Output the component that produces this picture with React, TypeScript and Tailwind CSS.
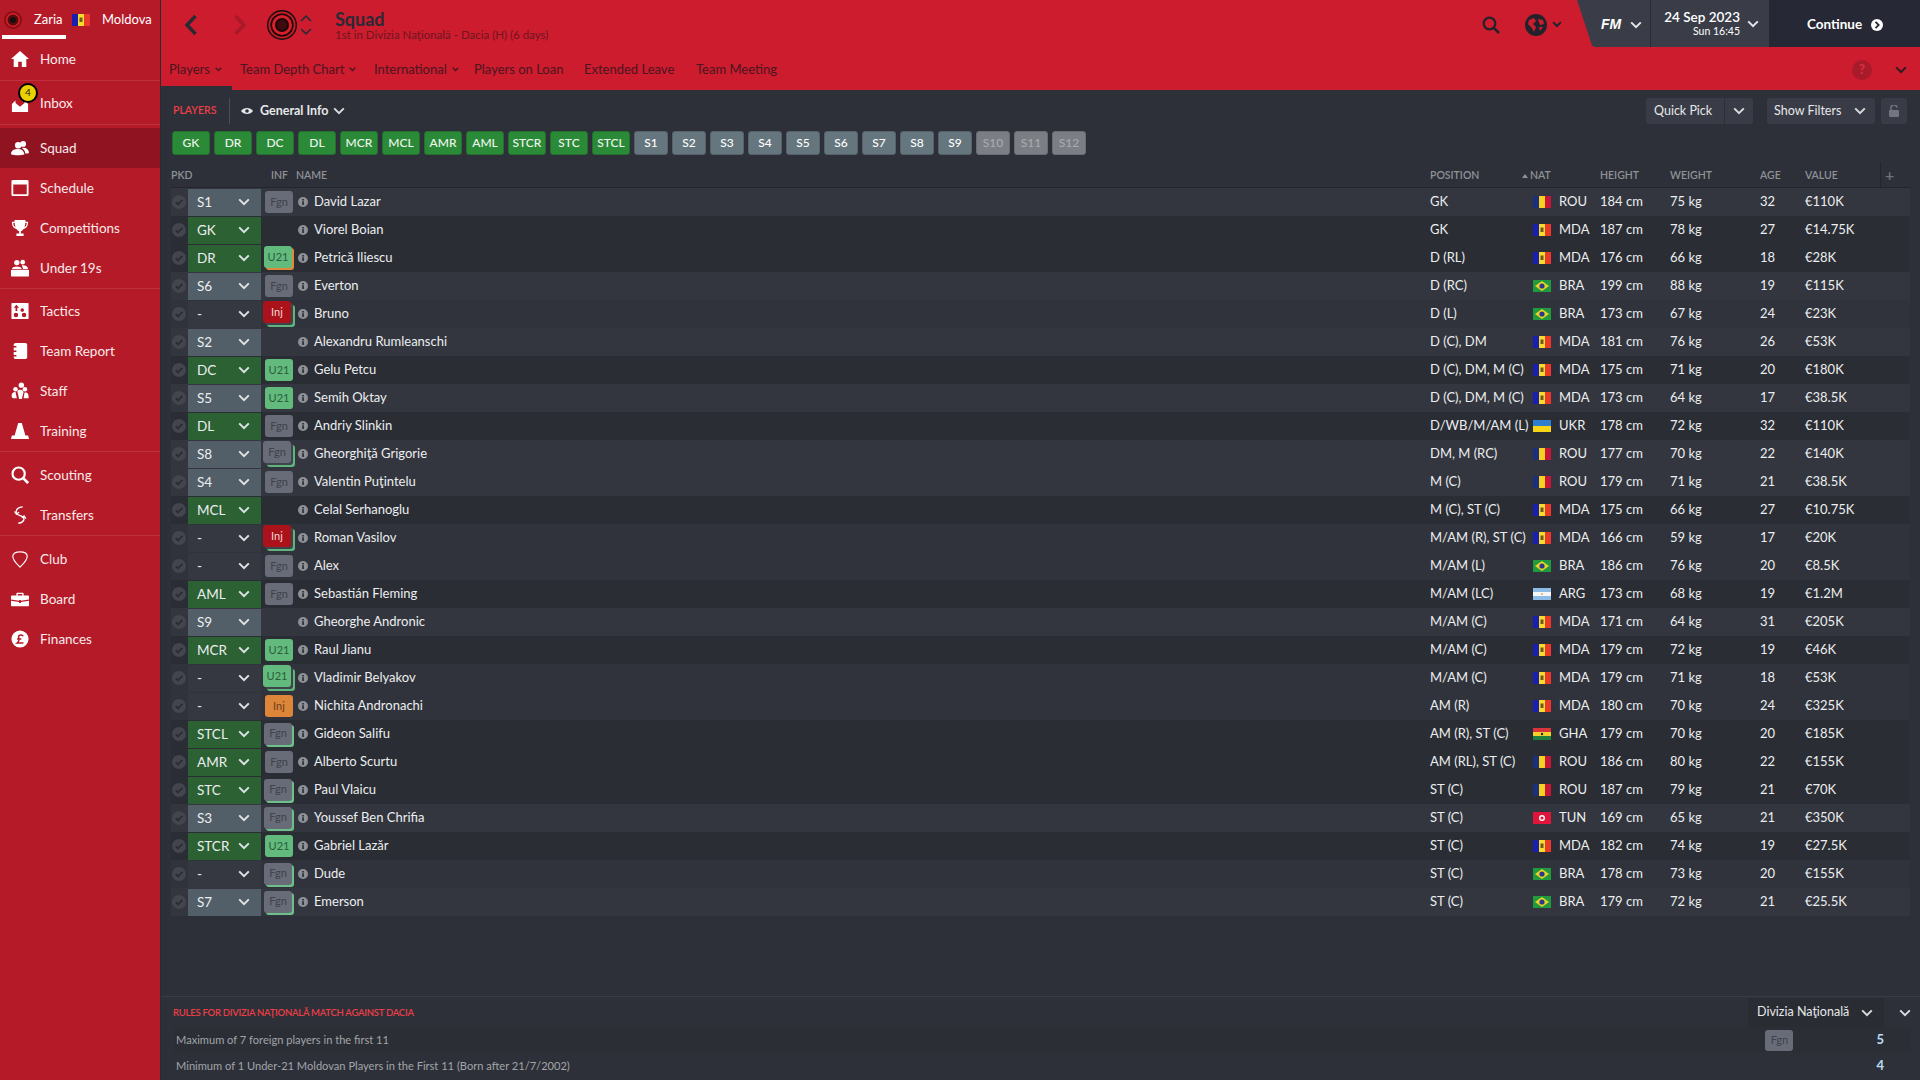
import type { ReactNode } from 'react'

type Nat = 'ROU' | 'MDA' | 'BRA' | 'UKR' | 'ARG' | 'GHA' | 'TUN'
type BadgeKind = 'Fgn' | 'U21' | 'Inj' | 'InjO' | null
type Stack = 'none' | 'thin' | 'orange' | 'double'

interface Player {
  pick: string
  badge: BadgeKind
  stack: Stack
  name: string
  pos: string
  nat: Nat
  height: number
  weight: number
  age: number
  value: string
}

const p = (
  pick: string,
  badge: BadgeKind,
  stack: Stack,
  name: string,
  pos: string,
  nat: Nat,
  height: number,
  weight: number,
  age: number,
  value: string,
): Player => ({ pick, badge, stack, name, pos, nat, height, weight, age, value })

const players: Player[] = [
  p('S1', 'Fgn', 'none', 'David Lazar', 'GK', 'ROU', 184, 75, 32, '€110K'),
  p('GK', null, 'none', 'Viorel Boian', 'GK', 'MDA', 187, 78, 27, '€14.75K'),
  p('DR', 'U21', 'orange', 'Petrică Iliescu', 'D (RL)', 'MDA', 176, 66, 18, '€28K'),
  p('S6', 'Fgn', 'none', 'Everton', 'D (RC)', 'BRA', 199, 88, 19, '€115K'),
  p('-', 'Inj', 'double', 'Bruno', 'D (L)', 'BRA', 173, 67, 24, '€23K'),
  p('S2', null, 'none', 'Alexandru Rumleanschi', 'D (C), DM', 'MDA', 181, 76, 26, '€53K'),
  p('DC', 'U21', 'none', 'Gelu Petcu', 'D (C), DM, M (C)', 'MDA', 175, 71, 20, '€180K'),
  p('S5', 'U21', 'none', 'Semih Oktay', 'D (C), DM, M (C)', 'MDA', 173, 64, 17, '€38.5K'),
  p('DL', 'Fgn', 'none', 'Andriy Slinkin', 'D/WB/M/AM (L)', 'UKR', 178, 72, 32, '€110K'),
  p('S8', 'Fgn', 'double', 'Gheorghiţă Grigorie', 'DM, M (RC)', 'ROU', 177, 70, 22, '€140K'),
  p('S4', 'Fgn', 'none', 'Valentin Puţintelu', 'M (C)', 'ROU', 179, 71, 21, '€38.5K'),
  p('MCL', null, 'none', 'Celal Serhanoglu', 'M (C), ST (C)', 'MDA', 175, 66, 27, '€10.75K'),
  p('-', 'Inj', 'double', 'Roman Vasilov', 'M/AM (R), ST (C)', 'MDA', 166, 59, 17, '€20K'),
  p('-', 'Fgn', 'none', 'Alex', 'M/AM (L)', 'BRA', 186, 76, 20, '€8.5K'),
  p('AML', 'Fgn', 'none', 'Sebastián Fleming', 'M/AM (LC)', 'ARG', 173, 68, 19, '€1.2M'),
  p('S9', null, 'none', 'Gheorghe Andronic', 'M/AM (C)', 'MDA', 171, 64, 31, '€205K'),
  p('MCR', 'U21', 'none', 'Raul Jianu', 'M/AM (C)', 'MDA', 179, 72, 19, '€46K'),
  p('-', 'U21', 'double', 'Vladimir Belyakov', 'M/AM (C)', 'MDA', 179, 71, 18, '€53K'),
  p('-', 'InjO', 'none', 'Nichita Andronachi', 'AM (R)', 'MDA', 180, 70, 24, '€325K'),
  p('STCL', 'Fgn', 'thin', 'Gideon Salifu', 'AM (R), ST (C)', 'GHA', 179, 70, 20, '€185K'),
  p('AMR', 'Fgn', 'none', 'Alberto Scurtu', 'AM (RL), ST (C)', 'ROU', 186, 80, 22, '€155K'),
  p('STC', 'Fgn', 'thin', 'Paul Vlaicu', 'ST (C)', 'ROU', 187, 79, 21, '€70K'),
  p('S3', 'Fgn', 'thin', 'Youssef Ben Chrifia', 'ST (C)', 'TUN', 169, 65, 21, '€350K'),
  p('STCR', 'U21', 'none', 'Gabriel Lazăr', 'ST (C)', 'MDA', 182, 74, 19, '€27.5K'),
  p('-', 'Fgn', 'thin', 'Dude', 'ST (C)', 'BRA', 178, 73, 20, '€155K'),
  p('S7', 'Fgn', 'thin', 'Emerson', 'ST (C)', 'BRA', 179, 72, 21, '€25.5K'),
]

const greenButtons = ['GK', 'DR', 'DC', 'DL', 'MCR', 'MCL', 'AMR', 'AML', 'STCR', 'STC', 'STCL']
const subButtons = ['S1', 'S2', 'S3', 'S4', 'S5', 'S6', 'S7', 'S8', 'S9']
const offButtons = ['S10', 'S11', 'S12']

function Chevron({ className = '' }: { className?: string }) {
  return (
    <svg width="12" height="8" viewBox="0 0 12 8" className={`shrink-0 ${className}`}>
      <path d="M1.2 1.4 L6 6.2 L10.8 1.4" fill="none" stroke="currentColor" strokeWidth="2" />
    </svg>
  )
}

function SmallChevron({ className = '' }: { className?: string }) {
  return (
    <svg width="7" height="5" viewBox="0 0 7 5" className={`shrink-0 ${className}`}>
      <path d="M0.7 0.8 L3.5 3.6 L6.3 0.8" fill="none" stroke="currentColor" strokeWidth="1.4" />
    </svg>
  )
}

function Flag({ nat }: { nat: Nat }) {
  const stripes3 = (a: string, b: string, c: string) => (
    <>
      <rect width="6" height="12" fill={a} />
      <rect x="6" width="6" height="12" fill={b} />
      <rect x="12" width="6" height="12" fill={c} />
    </>
  )
  return (
    <svg width="18" height="12" viewBox="0 0 18 12" className="shrink-0">
      {nat === 'ROU' && stripes3('#1c2f7c', '#f5d21f', '#c8163a')}
      {nat === 'MDA' && (
        <>
          {stripes3('#1a1fb0', '#f7dc2a', '#e8392b')}
          <rect x="7.5" y="3.5" width="3" height="4.5" fill="#6b5a1e" />
        </>
      )}
      {nat === 'BRA' && (
        <>
          <rect width="18" height="12" fill="#1f9a3c" />
          <path d="M9 1 L16 6 L9 11 L2 6 Z" fill="#e8d22a" />
          <circle cx="9" cy="6" r="2.6" fill="#2a3a8c" />
        </>
      )}
      {nat === 'UKR' && (
        <>
          <rect width="18" height="6" fill="#2f7fd0" />
          <rect y="6" width="18" height="6" fill="#f7d416" />
        </>
      )}
      {nat === 'ARG' && (
        <>
          <rect width="18" height="12" fill="#8cbce6" />
          <rect y="4" width="18" height="4" fill="#f4f6f8" />
          <circle cx="9" cy="6" r="1" fill="#e8b23a" />
        </>
      )}
      {nat === 'GHA' && (
        <>
          <rect width="18" height="4" fill="#d8343c" />
          <rect y="4" width="18" height="4" fill="#f2d22a" />
          <rect y="8" width="18" height="4" fill="#1f7f3c" />
          <circle cx="9" cy="6" r="1.2" fill="#222" />
        </>
      )}
      {nat === 'TUN' && (
        <>
          <rect width="18" height="12" fill="#e0153c" />
          <circle cx="9" cy="6" r="3" fill="#fff" />
          <circle cx="9" cy="6" r="1.6" fill="#e0153c" />
        </>
      )}
    </svg>
  )
}

function Badge({ kind, stack }: { kind: BadgeKind; stack: Stack }) {
  if (!kind) return null
  const color =
    kind === 'Fgn'
      ? 'bg-[#686c78] text-[#3f424a]'
      : kind === 'U21'
        ? 'bg-[#62bb7c] text-[#2c5c3c]'
        : kind === 'Inj'
          ? 'bg-[#ab1219] text-[#f0d8d8]'
          : 'bg-[#dd8538] text-[#6a4020]'
  const label = kind === 'InjO' ? 'Inj' : kind
  const shift =
    stack === 'double'
      ? 'ml-[2px] -mt-[4px] shadow-[2px_2px_0_#3e444c,4px_4px_0_#5fb57a]'
      : stack === 'orange'
        ? 'ml-[3px] -mt-[2px] shadow-[2px_2px_0_#df8a3a]'
        : stack === 'thin'
          ? 'ml-[3px] -mt-[1px] shadow-[2px_2px_0_#6cc088]'
          : 'ml-[4px]'
  return (
    <div
      className={`flex h-[22px] w-[28px] items-center justify-center rounded-[3px] text-[11px] ${color} ${shift}`}
    >
      {label}
    </div>
  )
}

function InfoDot({ className = '' }: { className?: string }) {
  return (
    <svg width="10" height="10" viewBox="0 0 10 10" className={`shrink-0 ${className}`}>
      <circle cx="5" cy="5" r="5" fill="#8d9095" />
      <rect x="4.2" y="4.2" width="1.7" height="3.8" fill="#2d3038" />
      <rect x="4.2" y="2" width="1.7" height="1.5" fill="#2d3038" />
    </svg>
  )
}

function Check() {
  return (
    <svg width="14" height="14" viewBox="0 0 14 14" className="shrink-0">
      <circle cx="7" cy="7" r="7" fill="#43464e" />
      <path d="M3.8 7.2 L6 9.4 L10.4 4.8" fill="none" stroke="#2a2d33" strokeWidth="1.8" />
    </svg>
  )
}

function PlayerRow({ player }: { player: Player }) {
  const { pick } = player
  const isSub = pick.startsWith('S') && /\d/.test(pick)
  const isNone = pick === '-'
  const rowBg = isSub ? 'bg-[#33363e]' : isNone ? 'bg-[#30333b]' : 'bg-[#2a2d34]'
  const pickBg = isSub ? 'bg-[#535f68]' : isNone ? 'bg-[#353841]' : 'bg-[#2b6133]'
  return (
    <div className={`flex h-[28px] items-center text-[13px] text-[#eceef0] ${rowBg}`}>
      <div className="flex w-[17px] justify-start pl-px">
        <Check />
      </div>
      <div
        className={`flex h-[27px] w-[73px] items-center justify-between pr-[11px] pl-[9px] text-[13.5px] ${pickBg}`}
      >
        <span>{pick}</span>
        <Chevron className="text-[#dfe2e4]" />
      </div>
      <div className="flex w-[35px] items-center">
        <Badge kind={player.badge} stack={player.stack} />
      </div>
      <div className="flex w-[18px] items-center pl-[2px]">
        <InfoDot />
      </div>
      <div className="flex-1">{player.name}</div>
      <div className="w-[100px]">{player.pos}</div>
      <div className="flex w-[70px] items-center pl-[3px]">
        <Flag nat={player.nat} />
        <span className="ml-[8px]">{player.nat}</span>
      </div>
      <div className="w-[70px]">{player.height} cm</div>
      <div className="w-[90px]">{player.weight} kg</div>
      <div className="w-[45px]">{player.age}</div>
      <div className="w-[105px]">{player.value}</div>
    </div>
  )
}

function NavIcon({ name }: { name: string }) {
  const common = { width: 20, height: 20, viewBox: '0 0 20 20', fill: 'white' }
  switch (name) {
    case 'Home':
      return (
        <svg {...common}>
          <path d="M10 1 L20 10 H17 V19 H12 V13 H8 V19 H3 V10 H0 Z" />
        </svg>
      )
    case 'Inbox':
      return (
        <svg {...common}>
          <path d="M1 10 L5 6 V9 L10 13 L15 9 V6 L19 10 V19 H1 Z" />
        </svg>
      )
    case 'Squad':
      return (
        <svg {...common}>
          <circle cx="8" cy="7" r="3.6" />
          <circle cx="13.5" cy="5.5" r="3.2" />
          <path d="M0 17 C0 12 4 11 8 11 C12 11 14 13 15 17 C11 18.5 4 18.5 0 17 Z" />
          <path d="M12 10 C16 9 19.5 11 20 15 L19 16 H16 C15.5 13 14 11.5 12 10 Z" />
        </svg>
      )
    case 'Schedule':
      return (
        <svg {...common}>
          <path
            fillRule="evenodd"
            d="M2 1 H18 A1.5 1.5 0 0 1 19.5 2.5 V17.5 A1.5 1.5 0 0 1 18 19 H2 A1.5 1.5 0 0 1 0.5 17.5 V2.5 A1.5 1.5 0 0 1 2 1 Z M2.5 6 V17 H17.5 V6 Z"
          />
        </svg>
      )
    case 'Competitions':
      return (
        <svg {...common}>
          <path
            fillRule="evenodd"
            d="M4 1 H16 V3 H19 C19 7 18 10 14 11 C13 12.5 12 13 11 13.5 V16 H14 V19 H6 V16 H9 V13.5 C8 13 7 12.5 6 11 C2 10 1 7 1 3 H4 Z M2.5 4.5 C2.6 6.5 3.2 8.3 5 9.2 C4.5 7.8 4.2 6.2 4.1 4.5 Z M17.5 4.5 H15.9 C15.8 6.2 15.5 7.8 15 9.2 C16.8 8.3 17.4 6.5 17.5 4.5 Z"
          />
        </svg>
      )
    case 'Tactics':
      return (
        <svg {...common}>
          <path
            fillRule="evenodd"
            d="M1.5 1 H18.5 A1 1 0 0 1 19.5 2 V18 A1 1 0 0 1 18.5 19 H1.5 A1 1 0 0 1 0.5 18 V2 A1 1 0 0 1 1.5 1 Z M6 3 L3 6.5 H5 V10 H7 V6.5 H9 Z M5.5 12 A2.5 2.5 0 1 0 5.5 17 A2.5 2.5 0 0 0 5.5 12 Z M14.5 12 A2.5 2.5 0 1 0 14.5 17 A2.5 2.5 0 0 0 14.5 12 Z M12.5 7 A2 2 0 1 0 12.5 11 A2 2 0 0 0 12.5 7 Z"
          />
        </svg>
      )
    case 'Team Report':
      return (
        <svg {...common}>
          <path d="M5 1 H16 A2 2 0 0 1 18 3 V17 A2 2 0 0 1 16 19 H5 A2 2 0 0 1 3 17 V16 H6 V14.5 H3 V11 H6 V9.5 H3 V6 H6 V4.5 H3 V3 A2 2 0 0 1 5 1 Z" />
        </svg>
      )
    case 'Staff':
      return (
        <svg {...common}>
          <circle cx="11.5" cy="3.5" r="3" />
          <circle cx="5" cy="8" r="2.5" />
          <circle cx="15.5" cy="8" r="2.5" />
          <path d="M7 10 C9 8 13 8 14 11 L12 19 H9 Z" />
          <path d="M1 17 C0 13 2 11 5 11 L6.5 18 H2 Z" />
          <path d="M15 12 C17 11 20 12 19.5 18 H14 Z" />
        </svg>
      )
    case 'Training':
      return (
        <svg {...common}>
          <path d="M8 1 H12 L16 15 H19 L20 19 H0 L1 15 H4 Z" />
        </svg>
      )
    case 'Scouting':
      return (
        <svg {...common}>
          <circle cx="8.5" cy="8.5" r="6.8" fill="none" stroke="white" strokeWidth="2.4" />
          <path d="M13.5 13.5 L19 19" stroke="white" strokeWidth="3" />
        </svg>
      )
    case 'Transfers':
      return (
        <svg {...common} fill="none" stroke="white" strokeWidth="1.5">
          <path d="M13 1 C8 1 5 4 6 8 C7 10 9 10 11 11 C14 12 15 14 14 16 C13 18 11 19 8 19" />
          <path d="M4 6 L6 9 L9 7" />
          <path d="M12 13 L14.5 11 L16.5 14" />
        </svg>
      )
    case 'Club':
      return (
        <svg {...common} fill="none" stroke="white" strokeWidth="1.3">
          <path d="M10 2 C14 2 18 3 18 7 C18 12 13 16 10 19 C7 16 2 12 2 7 C2 3 6 2 10 2 Z" />
        </svg>
      )
    case 'Board':
      return (
        <svg {...common}>
          <path
            fillRule="evenodd"
            d="M7 3 H13 A1 1 0 0 1 14 4 V6 H19 A1 1 0 0 1 20 7 V10.5 L11 12 V11 H9 V12 L0 10.5 V7 A1 1 0 0 1 1 6 H6 V4 A1 1 0 0 1 7 3 Z M7.5 4.5 V6 H12.5 V4.5 Z"
          />
          <path d="M0 12 L9 13.4 V14.5 H11 V13.4 L20 12 V17 A1 1 0 0 1 19 18 H1 A1 1 0 0 1 0 17 Z" />
        </svg>
      )
    case 'Finances':
      return (
        <svg {...common}>
          <circle cx="10" cy="10" r="9.5" />
          <path
            d="M13.5 7 C13 5.5 10 4.8 8.8 6.4 C8 7.6 8.6 9 8.8 11 C8.9 12.5 8 13.5 6.8 14.5 H13.8 M6.8 10 H11.5"
            fill="none"
            stroke="#b51a28"
            strokeWidth="1.7"
          />
        </svg>
      )
    default:
      return (
        <svg {...common}>
          <circle cx="6.5" cy="4" r="3" />
          <circle cx="13" cy="3.5" r="2.6" />
          <path d="M1 11 C2 7.5 11 7.5 12 11 Z" />
          <path d="M12 7 C15 6.5 18.5 7.5 19 11 H13.5 Z" />
          <rect x="-2" y="12" width="24" height="7.5" rx="3.7" />
        </svg>
      )
  }
}

function NavItem({ label, tall, active }: { label: string; tall?: boolean; active?: boolean }) {
  return (
    <div
      className={`flex items-center ${tall ? 'h-[43px] pt-[2px]' : 'h-[40px]'} pl-[11px] ${active ? 'bg-[#8f1320]' : ''}`}
    >
      <div className="relative flex w-[18px] items-center justify-center">
        <div className="w-[18px] [&>svg]:h-[18px] [&>svg]:w-[18px]">
          <NavIcon name={label} />
        </div>
        {label === 'Inbox' && (
          <div className="absolute -top-[12px] left-[7px] flex h-[20px] w-[20px] items-center justify-center rounded-full border-2 border-black bg-[#e9d200] text-[10px] text-[#222]">
            4
          </div>
        )}
      </div>
      <span className={`ml-[11px] text-[13.5px] ${active ? 'text-[#f6e9ea]' : 'text-[#f8eaeb]'}`}>
        {label}
      </span>
    </div>
  )
}

function Sidebar() {
  return (
    <aside className="w-[161px] shrink-0 border-r border-[#2a2c33] bg-[#b51a28]">
      <div className="relative flex h-[39px] items-center pl-[4px] text-[13px] text-white">
        <svg width="18" height="18" viewBox="0 0 18 18" className="shrink-0">
          <circle cx="9" cy="9" r="9" fill="#8a0f14" />
          <circle cx="9" cy="9" r="7" fill="#d8202a" />
          <circle cx="9" cy="9" r="5.5" fill="#5a0a0c" />
          <circle cx="9" cy="9" r="3" fill="#111" />
        </svg>
        <span className="ml-[12px] w-[38px]">Zaria</span>
        <Flag nat="MDA" />
        <span className="ml-[12px]">Moldova</span>
        <div className="absolute top-[35px] left-[2px] h-[4px] w-[64px] bg-white" />
      </div>
      <div className="h-[42px] border-b border-[#c0303d]">
        <NavItem label="Home" />
      </div>
      <div className="mb-[3px] border-b border-[#c0303d]">
        <NavItem label="Inbox" tall />
      </div>
      <div className="border-b border-[#c0303d]">
        <NavItem label="Squad" active />
        <NavItem label="Schedule" />
        <NavItem label="Competitions" />
        <NavItem label="Under 19s" />
      </div>
      <div className="border-b border-[#c0303d] pt-[2px]">
        <NavItem label="Tactics" />
        <NavItem label="Team Report" />
        <NavItem label="Staff" />
        <NavItem label="Training" />
      </div>
      <div className="border-b border-[#c0303d] pt-[3px]">
        <NavItem label="Scouting" />
        <NavItem label="Transfers" />
      </div>
      <div className="pt-[3px]">
        <NavItem label="Club" />
        <NavItem label="Board" />
        <NavItem label="Finances" />
      </div>
    </aside>
  )
}

function Tab({ label, chevron, active, width }: { label: string; chevron?: boolean; active?: boolean; width: string }) {
  return (
    <div className={`relative flex h-[43px] items-center pt-[2px] pl-[8px] ${width}`}>
      <span>{label}</span>
      {chevron && <SmallChevron className="ml-[5px]" />}
      {active && <div className="absolute right-0 bottom-0 left-0 h-[4px] bg-[#2d3038]" />}
    </div>
  )
}

function TopBar() {
  return (
    <div className="h-[90px] shrink-0 bg-[#cc1c2e]">
      <div className="flex h-[47px]">
        <div className="flex items-center pt-[2px] pl-[23px] text-[#2a2a35]">
          <svg width="14" height="22" viewBox="0 0 14 22">
            <path d="M11.5 2 L3 11 L11.5 20" fill="none" stroke="currentColor" strokeWidth="3.4" />
          </svg>
          <svg width="14" height="22" viewBox="0 0 14 22" className="ml-[35px] text-[#a81a2a]">
            <path d="M2.5 2 L11 11 L2.5 20" fill="none" stroke="currentColor" strokeWidth="3.4" />
          </svg>
          <svg width="30" height="30" viewBox="0 0 30 30" className="ml-[20px]">
            <circle cx="15" cy="15" r="15" fill="#111" />
            <circle cx="15" cy="15" r="13.6" fill="#c81b28" />
            <circle cx="15" cy="15" r="11.6" fill="#1a0507" />
            <circle cx="15" cy="15" r="10" fill="#d8202a" />
            <circle cx="15" cy="15" r="7" fill="#1a0507" />
            <circle cx="15" cy="15" r="5" fill="#400a0e" />
          </svg>
          <div className="ml-[3px] flex flex-col gap-[6px]">
            <svg width="12" height="7" viewBox="0 0 12 7">
              <path d="M1 6 L6 1.2 L11 6" fill="none" stroke="currentColor" strokeWidth="1.6" />
            </svg>
            <svg width="12" height="7" viewBox="0 0 12 7">
              <path d="M1 1 L6 5.8 L11 1" fill="none" stroke="currentColor" strokeWidth="1.6" />
            </svg>
          </div>
          <div className="ml-[23px] pt-[1px]">
            <div className="text-[18px] leading-[20px] font-bold">Squad</div>
            <div className="-mt-[1px] text-[11.5px] leading-[13px] text-[#6f1520]">
              1st in Divizia Naţională - Dacia (H) (6 days)
            </div>
          </div>
        </div>
        <div className="ml-auto flex items-center text-[#22222c]">
          <svg width="18" height="18" viewBox="0 0 18 18" className="mt-[2px]">
            <circle cx="7.5" cy="7.5" r="5.8" fill="none" stroke="currentColor" strokeWidth="2.2" />
            <path d="M11.8 11.8 L17 17" stroke="currentColor" strokeWidth="2.6" />
          </svg>
          <svg width="22" height="22" viewBox="0 0 22 22" className="mt-[2px] ml-[25px]">
            <circle cx="11" cy="11" r="11" fill="currentColor" />
            <path d="M4 6 L9 4 L11 7 L8 10 L11 13 L9 18 L7 14 L3 10 Z M13 5 L18 6 L19 10 L15 11 Z M14 13 L18 13 L15 17 Z" fill="#cc1c2e" />
          </svg>
          <SmallChevron className="mt-[2px] ml-[5px] h-[7px] w-[10px]" />
          <div className="ml-[15px] flex h-[47px] text-white">
            <div className="flex w-[73px] items-center bg-[#3a3d48] pt-[2px] pl-[24px] [clip-path:polygon(0_0,100%_0,100%_100%,18px_100%,15px_97%)]">
              <span className="font-['Liberation_Sans'] text-[14px] font-bold italic">FM</span>
              <Chevron className="ml-[9px] text-[#e4e5e8]" />
            </div>
            <div className="flex w-[119px] items-center border-l border-[#2a2c35] bg-[#3a3d48] pr-[10px]">
              <div className="flex-1 text-right">
                <div className="text-[13.5px] leading-[16px] font-semibold">24 Sep 2023</div>
                <div className="text-[10.5px] leading-[13px]">Sun 16:45</div>
              </div>
              <Chevron className="ml-[7px] text-[#e4e5e8]" />
            </div>
            <div className="flex w-[151px] items-center bg-[#262935] pt-[2px] pl-[38px] text-[13.5px] font-bold">
              <span>Continue</span>
              <svg width="12" height="12" viewBox="0 0 12 12" className="ml-[9px]">
                <circle cx="6" cy="6" r="6" fill="white" />
                <path d="M4.5 2.8 L7.7 6 L4.5 9.2" fill="none" stroke="#262935" strokeWidth="1.8" />
              </svg>
            </div>
          </div>
        </div>
      </div>
      <div className="flex items-center text-[13px] text-[#4a1620]">
        <Tab label="Players" chevron active width="w-[71px]" />
        <Tab label="Team Depth Chart" chevron width="w-[134px]" />
        <Tab label="International" chevron width="w-[100px]" />
        <Tab label="Players on Loan" width="w-[110px]" />
        <Tab label="Extended Leave" width="w-[112px]" />
        <Tab label="Team Meeting" width="w-[110px]" />
        <div className="ml-auto flex items-center pt-[2px] pr-[13px]">
          <div className="flex h-[20px] w-[20px] items-center justify-center rounded-full bg-[#a91a2a] text-[13px] font-black text-[#d4303e]">
            ?
          </div>
          <Chevron className="ml-[23px] text-[#2a1a22]" />
        </div>
      </div>
    </div>
  )
}

function ToolButton({ children, className = '' }: { children: ReactNode; className?: string }) {
  return (
    <div className={`flex h-[26px] items-center rounded-[3px] bg-[#393c46] text-[12.5px] text-[#e6e8ea] ${className}`}>
      {children}
    </div>
  )
}

function Toolbar() {
  return (
    <div className="flex h-[26px] items-center">
      <span className="ml-[2px] w-[56px] text-[10.5px] font-semibold text-[#ec3e46]">PLAYERS</span>
      <div className="h-[26px] w-px bg-[#4a4d55]" />
      <svg width="12" height="8" viewBox="0 0 12 8" className="ml-[11px]">
        <path d="M0 4 C2.5 0 9.5 0 12 4 C9.5 8 2.5 8 0 4 Z" fill="#e6e8ea" />
        <circle cx="6" cy="4" r="1.8" fill="#2d3038" />
      </svg>
      <span className="ml-[7px] text-[12.5px] font-bold text-[#e6e8ea]">General Info</span>
      <Chevron className="ml-[4px] text-[#d8dadc]" />
      <div className="mr-[3px] ml-auto flex items-center">
        <ToolButton className="w-[107px]">
          <span className="w-[78px] pl-[8px]">Quick Pick</span>
          <div className="flex h-[26px] flex-1 items-center justify-center border-l border-[#2d3038]">
            <Chevron className="text-[#d8dadc]" />
          </div>
        </ToolButton>
        <ToolButton className="ml-[14px] w-[108px] justify-between pr-[9px] pl-[7px]">
          <span>Show Filters</span>
          <Chevron className="text-[#d8dadc]" />
        </ToolButton>
        <ToolButton className="ml-[6px] w-[26px] justify-center">
          <svg width="10" height="12" viewBox="0 0 10 12">
            <path d="M2 5 V3.5 A3 3 0 0 1 8 2.5" fill="none" stroke="#73767e" strokeWidth="1.5" />
            <rect y="5" width="10" height="7" rx="1" fill="#73767e" />
          </svg>
        </ToolButton>
      </div>
    </div>
  )
}

function PositionButtons() {
  return (
    <div className="mt-[7px] flex h-[24px] gap-[4px] pl-[1px] text-[12px] font-medium">
      {greenButtons.map((b) => (
        <div key={b} className="flex w-[38px] items-center justify-center rounded-[3px] border border-[#236f2c] bg-[#2b8a37] text-[#eef6ee]">
          {b}
        </div>
      ))}
      {subButtons.map((b) => (
        <div key={b} className="flex w-[34px] items-center justify-center rounded-[3px] border border-[#55626a] bg-[#65767e] text-white">
          {b}
        </div>
      ))}
      {offButtons.map((b) => (
        <div key={b} className="flex w-[34px] items-center justify-center rounded-[3px] border border-[#6a6c72] bg-[#7c7e85] text-[#a8aaae]">
          {b}
        </div>
      ))}
    </div>
  )
}

function TableHeader() {
  return (
    <div className="mt-[10px] flex h-[23px] items-center border-b border-[#23252b] text-[10.5px] font-semibold text-[#8f9297]">
      <div className="w-[100px]">PKD</div>
      <div className="w-[25px]">INF</div>
      <div className="flex-1">NAME</div>
      <div className="w-[92px]">POSITION</div>
      <div className="flex w-[78px] items-center">
        <span className="h-0 w-0 border-x-[3px] border-b-[4px] border-x-transparent border-b-[#8f9297]" />
        <span className="ml-[2px]">NAT</span>
      </div>
      <div className="w-[70px]">HEIGHT</div>
      <div className="w-[90px]">WEIGHT</div>
      <div className="w-[45px]">AGE</div>
      <div className="w-[75px]">VALUE</div>
      <div className="-mt-[3px] flex h-[26px] w-[30px] items-center justify-start self-start border-l border-[#23252b] pl-[4px] text-[16px] text-[#6f7278]">
        +
      </div>
    </div>
  )
}

function RulesPanel() {
  return (
    <div className="relative h-[84px] shrink-0 border-t border-[#3a3d44] pr-[9px] pl-[12px]">
      <div className="mt-px flex h-[29px] items-center">
        <span className="pt-[2px] text-[9.5px] font-semibold tracking-[-0.25px] text-[#ec3e46]">
          RULES FOR DIVIZIA NAŢIONALĂ MATCH AGAINST DACIA
        </span>
        <div className="ml-auto flex h-[29px] w-[136px] items-center justify-between bg-[#292c33] pr-[11px] pl-[9px] text-[12.5px] text-[#e6e8ea]">
          <span>Divizia Naţională</span>
          <Chevron className="text-[#d8dadc]" />
        </div>
        <Chevron className="ml-[15px] text-[#d8dadc]" />
      </div>
      <div className="flex h-[26px] items-center bg-[#2b2e35] pr-[27px] pl-[3px] text-[11.1px] text-[#a2a5a9]">
        <span>Maximum of 7 foreign players in the first 11</span>
        <div className="mt-[1px] mr-[83px] ml-auto flex h-[21px] w-[28px] items-center justify-center rounded-[3px] bg-[#686c78] text-[11px] text-[#3f424a]">
          Fgn
        </div>
        <span className="text-[13px] font-bold text-[#bcdcf6]">5</span>
      </div>
      <div className="flex h-[26px] items-center pr-[27px] pl-[3px] text-[11.1px] text-[#a2a5a9]">
        <span>Minimum of 1 Under-21 Moldovan Players in the First 11 (Born after 21/7/2002)</span>
        <span className="ml-auto text-[13px] font-bold text-[#bcdcf6]">4</span>
      </div>
    </div>
  )
}

export default function App() {
  return (
    <div className="flex h-[1080px] w-[1920px] overflow-hidden bg-[#2d3038] font-['Lato',sans-serif]">
      <Sidebar />
      <main className="flex min-w-0 flex-1 flex-col">
        <TopBar />
        <div className="flex flex-1 flex-col pt-[8px] pr-[10px] pl-[10px]">
          <Toolbar />
          <PositionButtons />
          <TableHeader />
          <div>
            {players.map((player) => (
              <PlayerRow key={player.name} player={player} />
            ))}
          </div>
        </div>
        <RulesPanel />
      </main>
    </div>
  )
}
